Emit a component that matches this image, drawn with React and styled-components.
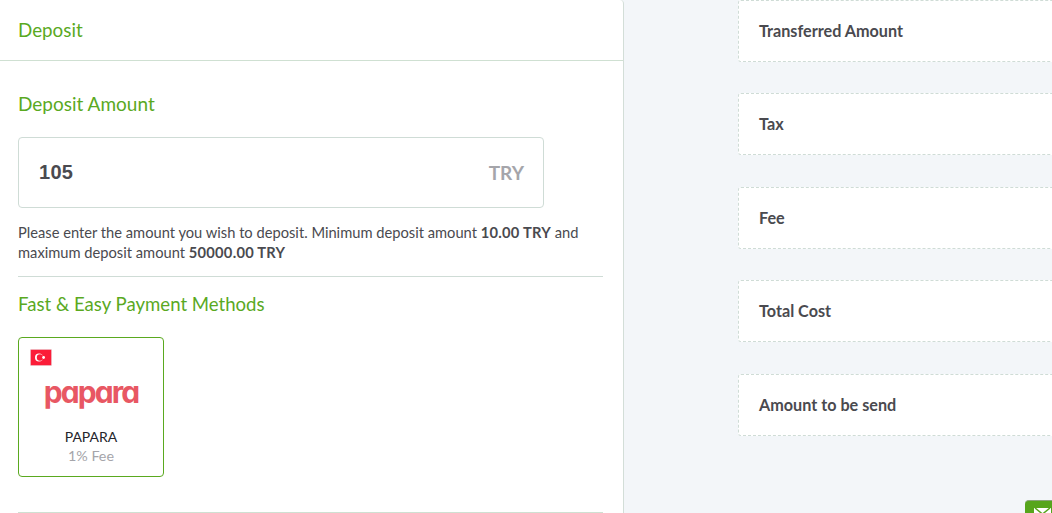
import React from "react";
import styled, { createGlobalStyle } from "styled-components";

const GlobalStyle = createGlobalStyle`
  html, body {
    margin: 0;
    padding: 0;
    height: 100%;
    overflow: hidden;
    background: #f3f6f9;
    font-family: "Lato", "Liberation Sans", sans-serif;
    color: #4a4a4f;
  }
`;

const Page = styled.div`
  display: flex;
  height: 513px;
  overflow: hidden;
`;

const LeftPanel = styled.section`
  width: 623px;
  height: 513px;
  flex: none;
  box-sizing: content-box;
  background: #fff;
  border-right: 1px solid #d3ded8;
  border-radius: 0 4px 0 0;
`;

const PanelHeader = styled.header`
  height: 60px;
  box-sizing: content-box;
  display: flex;
  align-items: center;
  padding-left: 18px;
  border-bottom: 1px solid #cfe0d2;
  font-size: 18.8px;
  color: #5aa91f;

  span {
    margin-top: -2px;
  }
`;

const PanelBody = styled.div`
  padding: 0 20px 0 18px;
`;

const SectionTitle = styled.h2`
  margin: 0;
  font-size: 18.6px;
  line-height: 24px;
  font-weight: 400;
  color: #5aa91f;
`;

const AmountTitle = styled(SectionTitle)`
  padding-top: 31px;
  font-size: 19px;
`;

const AmountBox = styled.div`
  width: 526px;
  height: 71px;
  box-sizing: border-box;
  margin-top: 21px;
  padding: 0 19px 0 20px;
  display: flex;
  align-items: center;
  justify-content: space-between;
  border: 1px solid #cfdcd6;
  border-radius: 4px;
  font-size: 19px;
  font-weight: 700;
`;

const AmountValue = styled.span`
  font-family: "Liberation Sans", sans-serif;
  font-size: 20px;
  letter-spacing: 0.3px;
`;

const Currency = styled.span`
  color: #a5a5aa;
`;

const Hint = styled.p`
  margin: 14px 0 0;
  padding-bottom: 14px;
  font-size: 14.7px;
  line-height: 20px;
  border-bottom: 1px solid #cfdcd6;

  b {
    letter-spacing: 0.25px;
  }
`;

const MethodsTitle = styled(SectionTitle)`
  padding-top: 15px;
`;

const MethodCard = styled.div`
  width: 146px;
  height: 140px;
  box-sizing: border-box;
  margin-top: 21px;
  padding: 11px 11px 0;
  border: 1px solid #5aa91f;
  border-radius: 4px;
  display: flex;
  flex-direction: column;
`;

const Flag = styled.svg`
  display: block;
  width: 22px;
  height: 17px;
`;

const Logo = styled.div`
  margin-top: 6px;
  text-align: center;
  font-family: "Inter", "Lato", sans-serif;
  font-feature-settings: "cv11" 1;
  font-size: 30px;
  line-height: 40px;
  font-weight: 700;
  letter-spacing: -1.9px;
  color: #e85763;
`;

const MethodName = styled.div`
  margin-top: 15px;
  text-align: center;
  font-size: 14px;
  line-height: 20px;
  color: #25252b;
`;

const MethodFee = styled.div`
  text-align: center;
  font-size: 14.3px;
  line-height: 18px;
  color: #a5a5aa;
`;

const BottomRule = styled.hr`
  margin: 35px 0 0;
  border: 0;
  border-top: 1px solid #cfe0d2;
`;

const SummaryColumn = styled.aside`
  flex: 1;
  margin: -0.5px -6px 0 114px;
  display: flex;
  flex-direction: column;
  gap: 31.5px;
`;

const SummaryRow = styled.div`
  height: 62px;
  flex: none;
  box-sizing: border-box;
  display: flex;
  align-items: center;
  padding-left: 20px;
  padding-bottom: 1px;
  background: #fff;
  border: 1px dashed #cfdcd6;
  border-radius: 3px;
  font-size: 16.2px;
  font-weight: 700;
`;

const ChatButton = styled.button`
  position: fixed;
  left: 1025px;
  top: 500px;
  width: 40px;
  height: 30px;
  box-sizing: border-box;
  padding: 7px 0 0 9px;
  display: flex;
  align-items: flex-start;
  background: #56a51c;
  border: 0;
  border-top: 1px solid #8aa57a;
  border-radius: 4px 0 0 0;
`;

const rows = ["Transferred Amount", "Tax", "Fee", "Total Cost", "Amount to be send"];

export default function App() {
  return (
    <>
      <GlobalStyle />
      <Page>
        <LeftPanel>
          <PanelHeader>
            <span>Deposit</span>
          </PanelHeader>
          <PanelBody>
            <AmountTitle>Deposit Amount</AmountTitle>
            <AmountBox>
              <AmountValue>105</AmountValue>
              <Currency>TRY</Currency>
            </AmountBox>
            <Hint>
              Please enter the amount you wish to deposit. Minimum deposit amount <b>10.00 TRY</b> and
              maximum deposit amount <b>50000.00 TRY</b>
            </Hint>
            <MethodsTitle>Fast &amp; Easy Payment Methods</MethodsTitle>
            <MethodCard>
              <Flag viewBox="0 0 22 17">
                <rect width="22" height="17" fill="#ececec" />
                <rect x="0.7" y="0.7" width="20.6" height="15.6" fill="#fb1c38" />
                <circle cx="9" cy="8.5" r="4" fill="#fff" />
                <circle cx="10" cy="8.5" r="3.2" fill="#fb1c38" />
                <circle cx="13.6" cy="8.5" r="1.4" fill="#fff" />
              </Flag>
              <Logo>papara</Logo>
              <MethodName>PAPARA</MethodName>
              <MethodFee>1% Fee</MethodFee>
            </MethodCard>
            <BottomRule />
          </PanelBody>
        </LeftPanel>
        <SummaryColumn>
          {rows.map((row) => (
            <SummaryRow key={row}>{row}</SummaryRow>
          ))}
        </SummaryColumn>
      </Page>
      <ChatButton aria-label="Message">
        <svg width="17" height="12" viewBox="0 0 17 12" style={{ display: "block" }}>
          <rect width="17" height="12" fill="#fff" />
          <path d="M1 0l7.5 6L16 0" fill="none" stroke="#56a51c" strokeWidth="1.5" />
        </svg>
      </ChatButton>
    </>
  );
}
